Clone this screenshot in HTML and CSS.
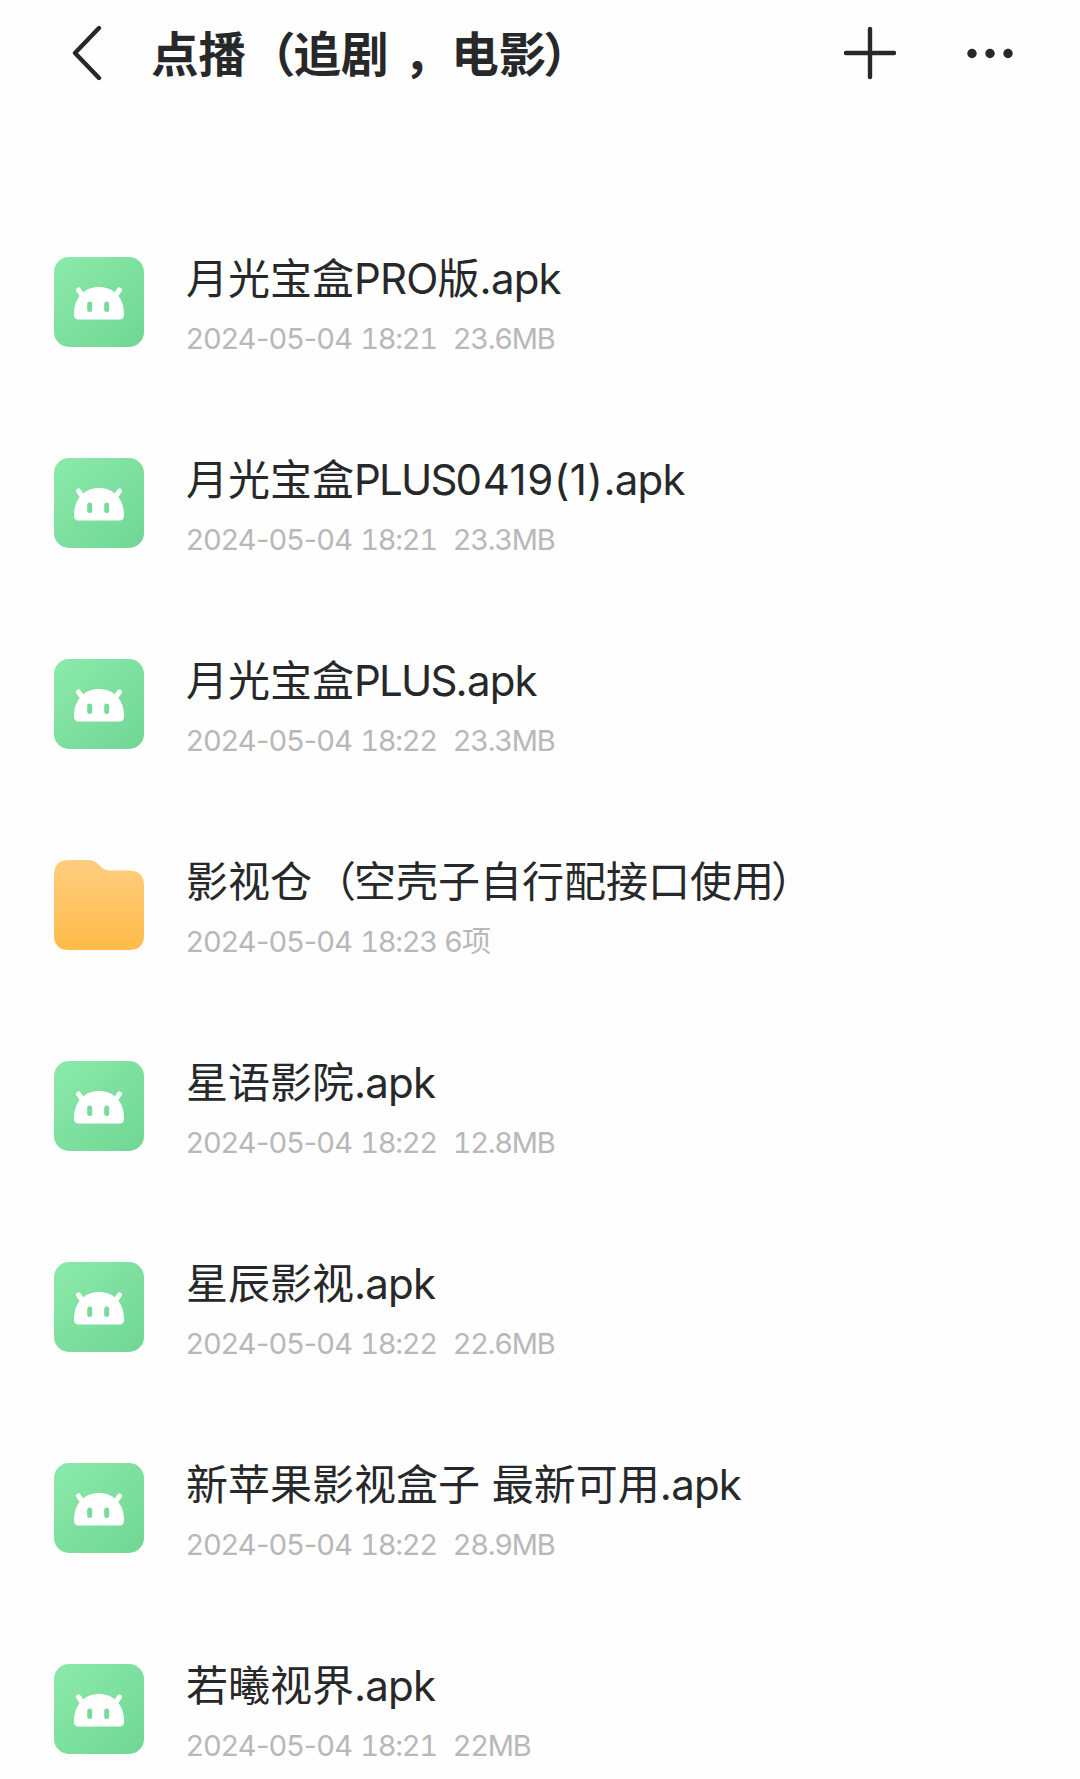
FILE: index.html
```html
<!DOCTYPE html>
<html lang="zh-CN">
<head>
    <meta charset="UTF-8">
    <meta name="viewport" content="width=device-width, initial-scale=1.0">
    <title>点播</title>
    <link rel="stylesheet" href="styles.css">
</head>
<body>
    <svg width="0" height="0" class="defs">
        <defs>
            <linearGradient id="green" x1="0" y1="0" x2="1" y2="1">
                <stop offset="0" stop-color="#8beaaa"/>
                <stop offset="1" stop-color="#70d694"/>
            </linearGradient>
            <linearGradient id="orange" x1="0" y1="0" x2="0" y2="1">
                <stop offset="0" stop-color="#ffcd7e"/>
                <stop offset="1" stop-color="#ffbb48"/>
            </linearGradient>
            <symbol id="apk" viewBox="0 0 90 90">
                <rect width="90" height="90" rx="15" fill="url(#green)"/>
                <path d="M24.5 33l5 7M65.500 33l-5 7" stroke="#fff" stroke-width="5" stroke-linecap="round"/>
                <path d="M20 57C20 40 31 30 45 30s25 10 25 27c0 4-1.500 5.500-5 5.500H25c-3.500 0-5-1.500-5-5.500z" fill="#fff"/>
                <rect x="33.200" y="44.500" width="5" height="10.500" rx="2.500" fill="#79da9a"/>
                <rect x="50.200" y="44.500" width="5" height="10.500" rx="2.500" fill="#79da9a"/>
            </symbol>
            <symbol id="folder" viewBox="0 0 90 90">
                <path d="M15 0H35C45 0 46 10.500 55 10.500H75Q90 10.500 90 25.500V75Q90 90 75 90H15Q0 90 0 75V15Q0 0 15 0z" fill="url(#orange)"/>
            </symbol>
        </defs>
    </svg>

    <header class="topbar">
        <svg class="back" width="32" height="60" viewBox="0 0 32 60">
            <path d="M29 4L5 29l24 25"/>
        </svg>
        <h1>点播<span class="open">（</span>追剧<span class="comma"> ，</span>电影<span class="close">）</span></h1>
        <svg class="plus" width="56" height="56" viewBox="0 0 56 56">
            <path d="M28 3v48M4 27h48"/>
        </svg>
        <svg class="more" width="48" height="12" viewBox="0 0 48 12">
            <circle cx="6" cy="5.500" r="4.700"/>
            <circle cx="24" cy="5.500" r="4.700"/>
            <circle cx="42" cy="5.500" r="4.700"/>
        </svg>
    </header>

    <ul class="files">
        <li class="file">
            <svg class="icon"><use href="#apk"/></svg>
            <div class="info">
                <p class="name">月光宝盒<span class="ext">PRO</span>版<span class="ext">.apk</span></p>
                <p class="meta">2024-05-04 <span class="time">18:21</span><span class="size">23.6MB</span></p>
            </div>
        </li>
        <li class="file">
            <svg class="icon"><use href="#apk"/></svg>
            <div class="info">
                <p class="name">月光宝盒<span class="plus-word">PLUS</span><span class="build">0419(1)</span><span class="ext">.apk</span></p>
                <p class="meta">2024-05-04 <span class="time">18:21</span><span class="size">23.3MB</span></p>
            </div>
        </li>
        <li class="file">
            <svg class="icon"><use href="#apk"/></svg>
            <div class="info">
                <p class="name">月光宝盒<span class="plus-word">PLUS</span><span class="ext">.apk</span></p>
                <p class="meta">2024-05-04 <span class="time">18:22</span><span class="size">23.3MB</span></p>
            </div>
        </li>
        <li class="file">
            <svg class="icon"><use href="#folder"/></svg>
            <div class="info">
                <p class="name">影视仓<span class="open">（</span>空壳子自行配接口使用<span class="close">）</span></p>
                <p class="meta">2024-05-04 <span class="time">18:23</span> 6项</p>
            </div>
        </li>
        <li class="file">
            <svg class="icon"><use href="#apk"/></svg>
            <div class="info">
                <p class="name">星语影院<span class="ext">.apk</span></p>
                <p class="meta">2024-05-04 <span class="time">18:22</span><span class="size">12.8MB</span></p>
            </div>
        </li>
        <li class="file">
            <svg class="icon"><use href="#apk"/></svg>
            <div class="info">
                <p class="name">星辰影视<span class="ext">.apk</span></p>
                <p class="meta">2024-05-04 <span class="time">18:22</span><span class="size">22.6MB</span></p>
            </div>
        </li>
        <li class="file">
            <svg class="icon"><use href="#apk"/></svg>
            <div class="info">
                <p class="name">新苹果影视盒子 最新可用<span class="ext">.apk</span></p>
                <p class="meta">2024-05-04 <span class="time">18:22</span><span class="size">28.9MB</span></p>
            </div>
        </li>
        <li class="file">
            <svg class="icon"><use href="#apk"/></svg>
            <div class="info">
                <p class="name">若曦视界<span class="ext">.apk</span></p>
                <p class="meta">2024-05-04 <span class="time">18:21</span><span class="size">22MB</span></p>
            </div>
        </li>
    </ul>
</body>
</html>
```

FILE: styles.css
```css
* {
    box-sizing: border-box;
    margin: 0;
    padding: 0;
}

body {
    height: 1779px;
    overflow: hidden;
    background-color: #fefefe;
    color: #27282a;
    font-family: Inter, "Noto Sans CJK SC", sans-serif;
}

.defs {
    display: block;
}

.topbar {
    display: flex;
    align-items: center;
    height: 107px;
    padding: 0 66px 0 70px;
}

.topbar h1 {
    flex: 1;
    margin-left: 49px;
    padding-top: 3px;
    font-size: 47.5px;
    font-weight: 700;
    line-height: 60px;
    white-space: nowrap;
}

.comma {
    word-spacing: 4px;
}

/* pull full-width brackets towards the text inside them */
.open {
    margin-left: 2px;
    margin-right: -2px;
}

.close {
    margin-left: -3px;
}

.back,
.plus {
    fill: none;
    stroke: #27282a;
    stroke-width: 4.4px;
    stroke-linecap: round;
    stroke-linejoin: round;
}

.more {
    margin-left: 68px;
    fill: #27282a;
}

.files {
    padding-top: 150px;
    list-style: none;
}

.file {
    display: flex;
    height: 201px;
    padding-left: 54px;
}

.icon {
    flex: none;
    width: 90px;
    height: 90px;
}

.info {
    margin-left: 42px;
    white-space: nowrap;
}

.name {
    font-size: 42px;
    line-height: 50px;
    margin-top: -3px;
}

.ext {
    letter-spacing: -0.8px;
}

.plus-word {
    letter-spacing: -1.8px;
}

.build {
    letter-spacing: 0.6px;
}

.meta {
    margin-top: 15px;
    font-size: 29px;
    line-height: 40px;
    letter-spacing: -0.5px;
    color: #b8b8b8;
}

/* digits of equal width keep the sizes in one column */
.time,
.size {
    font-variant-numeric: tabular-nums;
    letter-spacing: -1.3px;
}

.size {
    margin-left: 16px;
}
```
